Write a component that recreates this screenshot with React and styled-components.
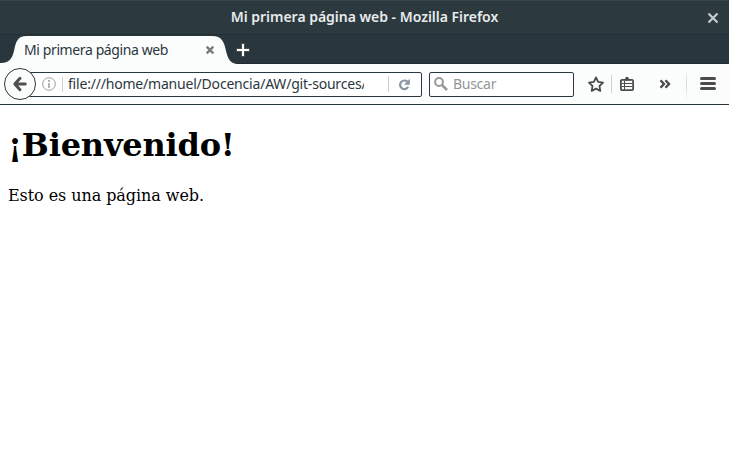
import React from "react";
import styled, { createGlobalStyle } from "styled-components";

const Global = createGlobalStyle`
  *, *::before, *::after { box-sizing: border-box; }
  body { margin: 0; background: #fff; overflow: hidden; }
`;

const Window = styled.div`
  width: 729px;
  height: 460px;
  display: flex;
  flex-direction: column;
  background: #fff;
  font-family: "Noto Sans", sans-serif;
  font-size: 14px;
  color: #2b373e;
`;

const TitleBar = styled.header`
  height: 35px;
  flex: none;
  display: grid;
  grid-template-columns: 32px 1fr 32px;
  align-items: center;
  background: #2c393f;
  border-top: 1px solid #37464d;
  border-bottom: 1px solid #232e34;
`;

const Title = styled.h1`
  grid-column: 2;
  margin: 0 0 2px;
  text-align: center;
  font-size: 14px;
  line-height: 20px;
  font-weight: 600;
  letter-spacing: -0.02px;
  color: #e8ebec;
  white-space: nowrap;
`;

const Icon = styled.svg`
  display: block;
  flex: none;
  overflow: visible;
`;

const WindowClose = styled(Icon)`
  margin-bottom: 2px;
`;

const TabStrip = styled.nav`
  height: 29px;
  flex: none;
  display: flex;
  background: #2a363d;
  border-bottom: 1px solid #222c33;
`;

const Tab = styled.div`
  position: relative;
  width: 239px;
  height: 29px;
  display: flex;
  align-items: center;
  padding-left: 24px;
`;

const TabShape = styled(Icon)`
  position: absolute;
  left: 0;
  top: 0;
`;

const TabLabel = styled.span`
  position: relative;
  width: 182px;
  line-height: 20px;
  letter-spacing: -0.39px;
  white-space: nowrap;
`;

const TabClose = styled(Icon)`
  position: relative;
`;

const NewTab = styled(Icon)`
  margin: 8px 0 0 -3px;
`;

const Toolbar = styled.div`
  height: 41px;
  flex: none;
  display: flex;
  align-items: center;
  padding-left: 4px;
  background: #fbfdfc;
  border-bottom: 1px solid #26343b;
`;

const BackButton = styled.div`
  position: relative;
  z-index: 1;
  width: 32px;
  height: 32px;
  flex: none;
  display: grid;
  place-items: center;
  border: 1px solid #2b373e;
  border-radius: 50%;
  background: #fbfdfc;
`;

const Field = styled.div`
  height: 25px;
  width: ${(p) => p.$width}px;
  flex: none;
  display: flex;
  align-items: center;
  border: 1px solid #2b373e;
  border-radius: 2px;
  background: #fff;
`;

const AddressField = styled(Field)`
  margin-left: -8px;
  padding-left: 13px;
`;

const SearchField = styled(Field)`
  margin-left: 7px;
  padding-left: 4px;
`;

const Address = styled.span`
  width: 296px;
  margin-left: 5px;
  overflow: hidden;
  line-height: 20px;
  letter-spacing: -0.2px;
  white-space: nowrap;
`;

const Placeholder = styled.span`
  margin-left: 5px;
  line-height: 20px;
  letter-spacing: -0.28px;
  color: #929698;
`;

const Divider = styled.i`
  width: 1px;
  height: ${(p) => p.$height}px;
  flex: none;
  margin: 0 ${(p) => p.$right}px 0 ${(p) => p.$left}px;
  background: ${(p) => p.$color || "#cdd0d1"};
`;

const Actions = styled.div`
  display: flex;
  align-items: center;
  margin-left: 14px;
`;

const Overflow = styled(Icon)`
  margin-left: 25px;
`;

const Page = styled.main`
  flex: 1;
  padding: 0 8px;
  font-family: "DejaVu Serif", serif;
  font-size: 16px;
  color: #000;
`;

const Heading = styled.h1`
  margin: 21px 0 0;
  font-size: 32px;
  line-height: 38px;
  font-weight: 700;
  letter-spacing: -0.2px;
`;

const Paragraph = styled.p`
  margin: 22px 0 0;
  line-height: 19px;
  letter-spacing: -0.07px;
`;

export default function App() {
  return (
    <Window>
      <Global />
      <TitleBar>
        <Title>Mi primera página web - Mozilla Firefox</Title>
        <WindowClose width="32" height="20">
          <path d="M11.5 6.5l9 9M20.5 6.5l-9 9" stroke="#c5cacc" strokeWidth="2.2" fill="none" />
        </WindowClose>
      </TitleBar>
      <TabStrip>
        <Tab>
          <TabShape width="240" height="29">
            <path
              d="M0 29V28H1C9 28 12 24 14 16C16 7 17 1 27 1H212C222 1 224 7 226 16C228 24 230 28 237 29Z"
              fill="#fbfdfc"
            />
          </TabShape>
          <TabLabel>Mi primera página web</TabLabel>
          <TabClose width="8" height="8">
            <path d="M0.7 0.7l6.6 6.6M7.3 0.7L0.7 7.3" stroke="#777d80" strokeWidth="2.4" />
          </TabClose>
        </Tab>
        <NewTab width="14" height="14">
          <path d="M7 0v14M0 7h14" stroke="#625e58" strokeOpacity="0.6" strokeWidth="4" />
          <path d="M7 1v12M1 7h12" stroke="#fff" strokeWidth="2" />
        </NewTab>
      </TabStrip>
      <Toolbar>
        <BackButton>
          <Icon width="16" height="16">
            <path d="M8 2.3L2.8 8 8 13.7M3.5 8H13.3" stroke="#505050" strokeWidth="3" strokeLinecap="round" strokeLinejoin="round" fill="none" />
          </Icon>
        </BackButton>
        <AddressField $width={394}>
          <Icon width="14" height="14">
            <circle cx="7" cy="7" r="6.3" fill="none" stroke="#999c9d" />
            <path d="M7 3v2M7 6v5" stroke="#999c9d" strokeWidth="1.5" />
          </Icon>
          <Divider $height={15} $left={6} $right={0} />
          <Address>file:///home/manuel/Docencia/AW/git-sources/</Address>
          <Divider $height={16} $left={24} $right={9} />
          <Icon width="13" height="13">
            <path d="M9.3 3.6A4.3 4.3 0 1 0 10.2 8.8" stroke="#8795a0" strokeWidth="2.2" fill="none" />
            <path d="M11.8 0.8v5.9H6z" fill="#8795a0" />
          </Icon>
        </AddressField>
        <SearchField $width={145}>
          <Icon width="14" height="14">
            <circle cx="5" cy="5" r="3.9" fill="none" stroke="#999" strokeWidth="2" />
            <path d="M8 8l5 5" stroke="#999" strokeWidth="2.6" />
          </Icon>
          <Placeholder>Buscar</Placeholder>
        </SearchField>
        <Actions>
          <Icon width="16" height="16">
            <path
              d="M8 1.4l2.1 4.5 4.9.7-3.5 3.4.8 4.9L8 12.6l-4.3 2.3.8-4.9L1 6.6l4.9-.7z"
              fill="none"
              stroke="#4c4c4c"
              strokeWidth="1.8"
              strokeLinejoin="round"
            />
          </Icon>
          <Divider $height={18} $left={7} $right={8} />
          <Icon width="14" height="14">
            <rect x="0.9" y="2.9" width="12.2" height="10.2" rx="1" fill="none" stroke="#4c4c4c" strokeWidth="1.8" />
            <path d="M3 3.5L5.2 1.5Q5.5 -0.3 7 -0.3T8.8 1.5L11 3.5z" fill="#4c4c4c" />
            <path d="M2 6.5h10M2 9.5h10M4.5 4v9" stroke="#4c4c4c" strokeWidth="1" />
          </Icon>
          <Overflow width="13" height="10">
            <path d="M1.5 1.2L5 5 1.5 8.8M6.5 1.2L10 5 6.5 8.8" stroke="#4c4c4c" strokeWidth="2.4" fill="none" />
          </Overflow>
          <Divider $height={34} $left={14} $right={13} $color="linear-gradient(#fbfdfc, #d6d9da 50%, #fbfdfc)" />
          <Icon width="16" height="14">
            <path d="M1.5 1.5h13M1.5 6.5h13M1.5 11.5h13" stroke="#4c4c4c" strokeWidth="3" strokeLinecap="round" />
          </Icon>
        </Actions>
      </Toolbar>
      <Page>
        <Heading>¡Bienvenido!</Heading>
        <Paragraph>Esto es una página web.</Paragraph>
      </Page>
    </Window>
  );
}
